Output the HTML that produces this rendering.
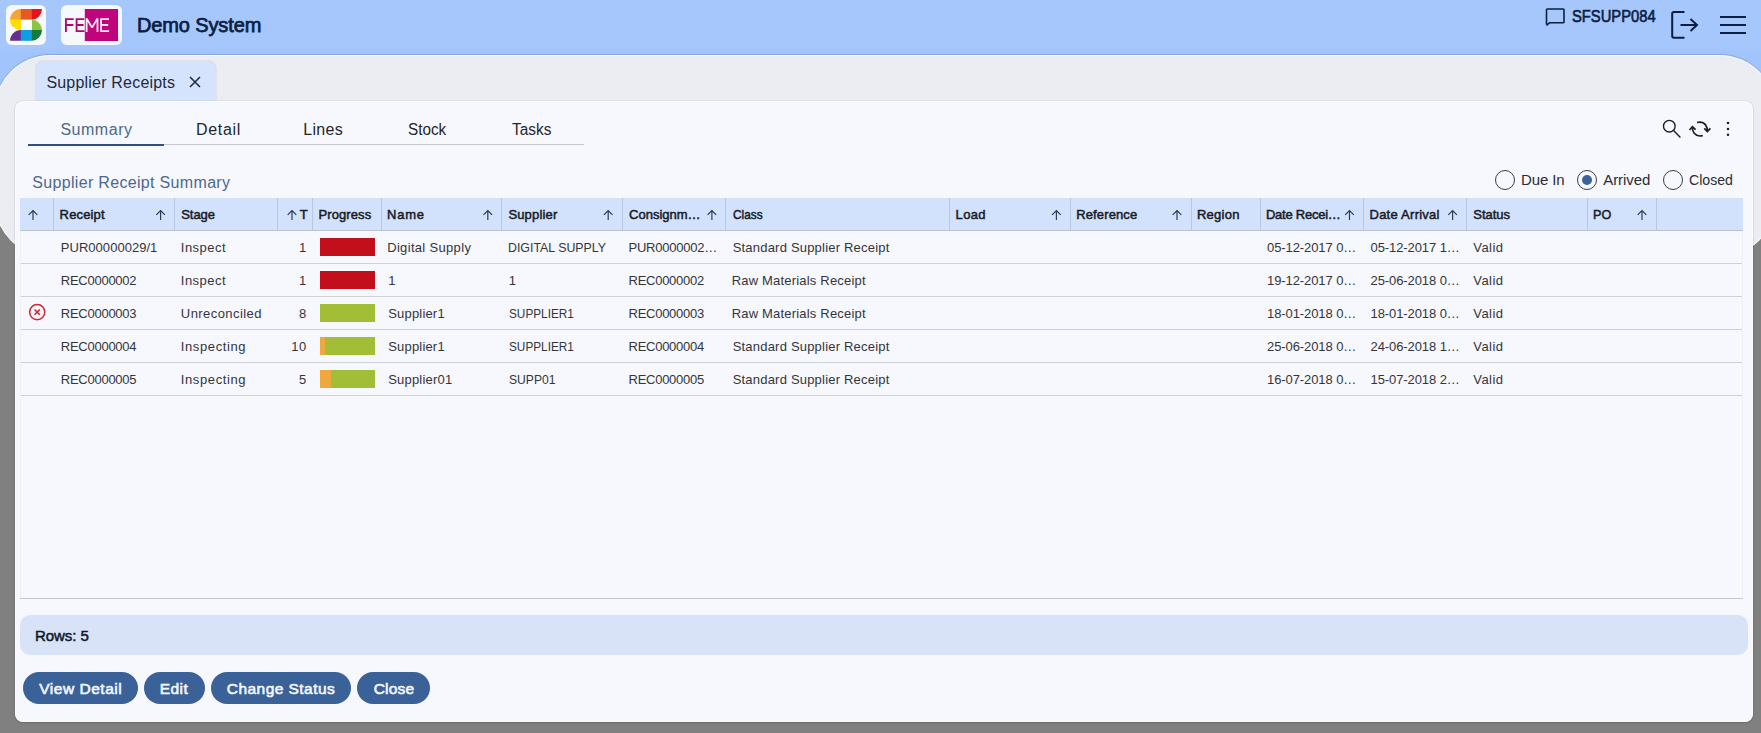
<!DOCTYPE html>
<html><head><meta charset="utf-8">
<style>
html,body{margin:0;padding:0;}
body{width:1761px;height:733px;overflow:hidden;background:#808080;position:relative;font-family:"Liberation Sans",sans-serif;}
.a{position:absolute;}
.t{position:absolute;line-height:0;white-space:nowrap;font-family:"Liberation Sans",sans-serif;}
.hdr{left:0;top:0;width:1761px;height:160px;background:linear-gradient(#a5c7fc 0px, #a5c7fc 44px, #a1c4fc 54px);}
.cont{left:-6.5px;top:54.5px;width:1782.5px;height:202px;border-radius:56.5px;background:#ecedf2;box-sizing:border-box;border:1px solid rgba(250,252,255,0.9);box-shadow:0 -0.5px 1px rgba(30,50,110,0.2);}
.logo{background:#f7f8fc;border-radius:6px;}
.panel{left:15px;top:101px;width:1738px;height:621px;border-radius:8px;background:#f7f8fd;box-shadow:0 0 1px rgba(0,0,0,0.35), 0 1px 2px rgba(0,0,0,0.15), inset 0 0 0 1px rgba(255,255,255,0.6);}
.tab{left:36px;top:61px;width:180px;height:40px;border-radius:8px 8px 0 0;background:#d5e4fc;box-shadow:0 0 1.5px rgba(0,0,0,0.22);}
.thead{left:20px;top:198px;width:1723px;height:32px;background:#d2e1fc;border-bottom:1px solid #bcc3d0;}
.vd{top:198px;width:1px;height:32px;background:#b9c7de;}
.hl{left:20px;width:1723px;height:1px;background:#cdd0d6;}
.bar{top:0;height:18px;}
.btn{top:672px;height:32px;border-radius:16px;background:#3a6299;}
.radio{width:20px;height:20px;border:1.3px solid #3a3d44;border-radius:50%;box-sizing:border-box;top:170px;}
</style></head><body>
<div class="a hdr"></div>
<div class="a cont"></div>

<!-- logo S -->
<div class="a logo" style="left:6px;top:5px;width:40px;height:40px;"></div>
<svg class="a" style="left:0;top:0" width="60" height="50" viewBox="0 0 60 50">
  <path d="M21 9 V19.8 H10 A11 10.8 0 0 1 21 9 Z" fill="#f6a533"/>
  <rect x="20.8" y="9" width="11.2" height="10.8" fill="#ea5624"/>
  <path d="M31.8 9 H42 A10.5 10.8 0 0 1 31.8 19.8 Z" fill="#e3121b"/>
  <path d="M10 19.8 H21 V30 A11 10.2 0 0 1 10 19.8 Z" fill="#ffdd00"/>
  <path d="M31.8 19.8 A10.5 10.2 0 0 1 42 30 H31.8 Z" fill="#8cc43e"/>
  <path d="M10 40.8 A11 10.8 0 0 1 21 30 V40.8 Z" fill="#672d8f"/>
  <rect x="20.8" y="30" width="11.2" height="10.8" fill="#0aa0e2"/>
  <rect x="21" y="19.8" width="10.8" height="10.2" fill="#ffffff"/>
  <path d="M31.8 30 H42 A10.5 10.8 0 0 1 31.8 40.8 Z" fill="#14793a"/>
</svg>
<!-- logo FEME -->
<div class="a logo" style="left:61px;top:5px;width:61px;height:40px;"></div>
<svg class="a" style="left:0;top:0" width="130" height="50" viewBox="0 0 130 50">
  <defs><clipPath id="cl"><rect x="0" y="0" width="84.8" height="50"/></clipPath>
  <clipPath id="cr"><rect x="84.8" y="0" width="50" height="50"/></clipPath></defs>
  <path d="M84.8 9 H118 V41 H84.8 Z" fill="#c0047c"/>
  <g id="feme" fill="none" stroke-width="1.85" stroke-linejoin="miter">
  </g>
  <g clip-path="url(#cl)" fill="none" stroke="#b2066f" stroke-width="1.85">
    <path d="M65.9 31.9 V19.05 H73.7 M65.9 25 H73.4"/>
    <path d="M84.2 19.05 H76.6 V31.05 H84.8 M76.6 25 H83.6"/>
  </g>
  <g clip-path="url(#cr)" fill="none" stroke="#fbe9f6" stroke-width="1.85">
    <path d="M84.2 19.05 H76.6 V31.05 H84.8 M76.6 25 H83.6"/>
    <path d="M86.6 31.9 V18.4 L92.05 27.6 L97.5 18.4 V31.9" stroke-linejoin="bevel"/>
    <path d="M109 19.05 H101.1 V31.05 H109.1 M101.1 25 H108.2"/>
  </g>
</svg>
<!-- chat icon -->
<svg class="a" style="left:1540px;top:4px" width="30" height="26" viewBox="0 0 30 26">
  <path d="M6.5 20.5 V5.8 Q6.5 5 7.3 5 H23.2 Q24 5 24 5.8 V18 Q24 18.8 23.2 18.8 H9.5 L6.5 21.5" fill="none" stroke="#0c1e42" stroke-width="1.6" stroke-linejoin="round"/>
</svg>
<!-- logout -->
<svg class="a" style="left:1665px;top:5px" width="40" height="40" viewBox="0 0 40 40">
  <path d="M19.5 7 H9 Q7.2 7 7.2 8.8 V31 Q7.2 32.8 9 32.8 H19.5" fill="none" stroke="#0c1e42" stroke-width="2" />
  <path d="M15.5 20 H32" fill="none" stroke="#0c1e42" stroke-width="2"/>
  <path d="M25.5 14 L32 20 L25.5 26" fill="none" stroke="#0c1e42" stroke-width="2" stroke-linejoin="miter"/>
</svg>
<!-- hamburger -->
<div class="a" style="left:1720px;top:15.7px;width:26px;height:2.1px;background:#0c1e42"></div>
<div class="a" style="left:1720px;top:23.8px;width:26px;height:2.1px;background:#0c1e42"></div>
<div class="a" style="left:1720px;top:32px;width:26px;height:2.1px;background:#0c1e42"></div>

<!-- tab -->
<div class="a tab"></div>
<svg class="a" style="left:185px;top:72px" width="20" height="20" viewBox="0 0 20 20">
  <path d="M5 5 L15 15 M15 5 L5 15" stroke="#1d2a3c" stroke-width="1.5"/>
</svg>

<!-- panel -->
<div class="a panel"></div>

<!-- subtabs lines -->
<div class="a" style="left:28px;top:144px;width:556px;height:1.2px;background:#c6c7cb"></div>
<div class="a" style="left:28px;top:143.6px;width:136px;height:2.4px;background:#31507e"></div>

<!-- toolbar icons -->
<svg class="a" style="left:1655px;top:112px" width="90" height="32" viewBox="0 0 90 32">
  <circle cx="14.3" cy="14.2" r="5.8" fill="none" stroke="#1b1d22" stroke-width="1.35"/>
  <path d="M18.6 18.6 L25.4 25.4" stroke="#1b1d22" stroke-width="1.45"/>
  <path d="M47.8 23.5 Q42.5 25.2 39.2 21.2 Q37 18.3 37.5 15" fill="none" stroke="#1b1d22" stroke-width="1.7"/>
  <path d="M34.5 18 L37.4 14.8 L40.6 17.6" fill="none" stroke="#1b1d22" stroke-width="1.7"/>
  <path d="M42 10.5 Q47.5 9.1 50.6 12.9 Q52.6 15.7 52.3 19.1" fill="none" stroke="#1b1d22" stroke-width="1.7"/>
  <path d="M49.3 16.3 L52.3 19.5 L55.4 16.3" fill="none" stroke="#1b1d22" stroke-width="1.7"/>
  <circle cx="73" cy="11" r="1.25" fill="#1b1d22"/>
  <circle cx="73" cy="17" r="1.25" fill="#1b1d22"/>
  <circle cx="73" cy="22.8" r="1.25" fill="#1b1d22"/>
</svg>

<!-- radios -->
<div class="a radio" style="left:1495px;"></div>
<div class="a radio" style="left:1577px;"></div>
<div class="a" style="left:1581.8px;top:174.9px;width:10.2px;height:10.2px;border-radius:50%;background:#3a6199"></div>
<div class="a radio" style="left:1663px;"></div>

<!-- table header -->
<div class="a thead"></div>
<div class="a vd" style="left:53px"></div>
<div class="a vd" style="left:174px"></div>
<div class="a vd" style="left:277px"></div>
<div class="a vd" style="left:312px"></div>
<div class="a vd" style="left:381px"></div>
<div class="a vd" style="left:501px"></div>
<div class="a vd" style="left:622px"></div>
<div class="a vd" style="left:725px"></div>
<div class="a vd" style="left:949px"></div>
<div class="a vd" style="left:1070px"></div>
<div class="a vd" style="left:1191px"></div>
<div class="a vd" style="left:1260px"></div>
<div class="a vd" style="left:1363px"></div>
<div class="a vd" style="left:1466px"></div>
<div class="a vd" style="left:1587px"></div>
<div class="a vd" style="left:1656px"></div>
<svg class="a" style="left:0;top:198px" width="1761" height="32" viewBox="0 0 1761 32">
  <g fill="none" stroke="#2a3850" stroke-width="1.15">
  <path d="M33 22 V12.6 M28.7 16.9 L33 12.6 L37.3 16.9"/>
<path d="M160.6 22 V12.6 M156.29999999999998 16.9 L160.6 12.6 L164.9 16.9"/>
<path d="M292 22 V12.6 M287.7 16.9 L292 12.6 L296.3 16.9"/>
<path d="M487.8 22 V12.6 M483.5 16.9 L487.8 12.6 L492.1 16.9"/>
<path d="M608.2 22 V12.6 M603.9000000000001 16.9 L608.2 12.6 L612.5 16.9"/>
<path d="M711.9 22 V12.6 M707.6 16.9 L711.9 12.6 L716.1999999999999 16.9"/>
<path d="M1056.4 22 V12.6 M1052.1000000000001 16.9 L1056.4 12.6 L1060.7 16.9"/>
<path d="M1177 22 V12.6 M1172.7 16.9 L1177 12.6 L1181.3 16.9"/>
<path d="M1349.5 22 V12.6 M1345.2 16.9 L1349.5 12.6 L1353.8 16.9"/>
<path d="M1452.6 22 V12.6 M1448.3 16.9 L1452.6 12.6 L1456.8999999999999 16.9"/>
<path d="M1642 22 V12.6 M1637.7 16.9 L1642 12.6 L1646.3 16.9"/>

  </g>
</svg>

<!-- row lines -->
<div class="a hl" style="top:263px"></div>
<div class="a hl" style="top:296px"></div>
<div class="a hl" style="top:329px"></div>
<div class="a hl" style="top:362px"></div>
<div class="a hl" style="top:395px"></div>

<!-- progress bars -->
<div class="a" style="left:320px;top:238px;width:55px;height:18px;background:#c30f1b"></div>
<div class="a" style="left:320px;top:271px;width:55px;height:18px;background:#c30f1b"></div>
<div class="a" style="left:320px;top:304px;width:55px;height:18px;background:#a1be36"></div>
<div class="a" style="left:320px;top:337px;width:55px;height:18px;background:#a1be36"></div>
<div class="a" style="left:320px;top:337px;width:5px;height:18px;background:#eea83e"></div>
<div class="a" style="left:320px;top:370px;width:55px;height:18px;background:#a1be36"></div>
<div class="a" style="left:320px;top:370px;width:11px;height:18px;background:#eea83e"></div>

<!-- error icon -->
<svg class="a" style="left:27px;top:302px" width="20" height="20" viewBox="0 0 20 20">
  <circle cx="10.2" cy="10.1" r="7.6" fill="none" stroke="#d2222d" stroke-width="1.5"/>
  <path d="M7.6 7.5 L12.8 12.7 M12.8 7.5 L7.6 12.7" stroke="#d2222d" stroke-width="1.6"/>
</svg>

<!-- bottom -->
<div class="a" style="left:20px;top:598px;width:1723px;height:1px;background:#c6c7cb"></div>
<div class="a" style="left:1742px;top:231px;width:1px;height:367px;background:#eef0f5"></div>
<div class="a" style="left:20px;top:231px;width:1px;height:367px;background:#eef0f5"></div>
<div class="a" style="left:20px;top:615px;width:1728px;height:40px;border-radius:10px;background:#d9e3f8"></div>

<div class="a btn" style="left:23px;width:115px"></div>
<div class="a btn" style="left:144px;width:61px"></div>
<div class="a btn" style="left:211px;width:140px"></div>
<div class="a btn" style="left:357px;width:73px"></div>

<div class="t" style="left:136.90px;top:25.00px;font-size:20px;letter-spacing:-0.113px;color:#0c1e42;-webkit-text-stroke:0.75px #0c1e42;">Demo System</div>
<div class="t" style="left:1572.00px;top:17.00px;font-size:16px;letter-spacing:0.000px;color:#0c1e42;-webkit-text-stroke:0.6px #0c1e42;transform:scaleX(0.9217);transform-origin:0 0;">SFSUPP084</div>
<div class="t" style="left:46.40px;top:83.00px;font-size:16px;letter-spacing:0.200px;color:#1d2a3c;">Supplier Receipts</div>
<div class="t" style="left:60.40px;top:130.00px;font-size:16px;letter-spacing:0.524px;color:#4b6891;">Summary</div>
<div class="t" style="left:196.00px;top:130.00px;font-size:16px;letter-spacing:0.690px;color:#23262c;">Detail</div>
<div class="t" style="left:303.20px;top:130.00px;font-size:16px;letter-spacing:0.312px;color:#23262c;">Lines</div>
<div class="t" style="left:407.80px;top:130.00px;font-size:16px;letter-spacing:0.000px;color:#23262c;transform:scaleX(0.9533);transform-origin:0 0;">Stock</div>
<div class="t" style="left:512.40px;top:130.00px;font-size:16px;letter-spacing:0.000px;color:#23262c;transform:scaleX(0.9634);transform-origin:0 0;">Tasks</div>
<div class="t" style="left:32.30px;top:183.00px;font-size:16px;letter-spacing:0.322px;color:#4b6891;">Supplier Receipt Summary</div>
<div class="t" style="left:1520.90px;top:180.00px;font-size:15px;letter-spacing:-0.090px;color:#2a2d33;">Due In</div>
<div class="t" style="left:1603.20px;top:180.00px;font-size:15px;letter-spacing:-0.062px;color:#2a2d33;">Arrived</div>
<div class="t" style="left:1689.00px;top:180.00px;font-size:15px;letter-spacing:0.000px;color:#2a2d33;transform:scaleX(0.9407);transform-origin:0 0;">Closed</div>
<div class="t" style="left:59.60px;top:215.00px;font-size:13px;letter-spacing:0.156px;color:#171c28;-webkit-text-stroke:0.5px #171c28;">Receipt</div>
<div class="t" style="left:181.20px;top:215.00px;font-size:13px;letter-spacing:-0.036px;color:#171c28;-webkit-text-stroke:0.5px #171c28;">Stage</div>
<div class="t" style="left:299.70px;top:215.00px;font-size:13px;letter-spacing:0.000px;color:#171c28;-webkit-text-stroke:0.5px #171c28;">T</div>
<div class="t" style="left:318.50px;top:215.00px;font-size:13px;letter-spacing:0.097px;color:#171c28;-webkit-text-stroke:0.5px #171c28;">Progress</div>
<div class="t" style="left:387.00px;top:215.00px;font-size:13px;letter-spacing:0.784px;color:#171c28;-webkit-text-stroke:0.5px #171c28;">Name</div>
<div class="t" style="left:508.40px;top:215.00px;font-size:13px;letter-spacing:0.162px;color:#171c28;-webkit-text-stroke:0.5px #171c28;">Supplier</div>
<div class="t" style="left:629.00px;top:215.00px;font-size:13px;letter-spacing:0.009px;color:#171c28;-webkit-text-stroke:0.5px #171c28;">Consignm…</div>
<div class="t" style="left:733.00px;top:215.00px;font-size:13px;letter-spacing:0.000px;color:#171c28;-webkit-text-stroke:0.5px #171c28;transform:scaleX(0.9089);transform-origin:0 0;">Class</div>
<div class="t" style="left:955.60px;top:215.00px;font-size:13px;letter-spacing:0.303px;color:#171c28;-webkit-text-stroke:0.5px #171c28;">Load</div>
<div class="t" style="left:1076.20px;top:215.00px;font-size:13px;letter-spacing:0.131px;color:#171c28;-webkit-text-stroke:0.5px #171c28;">Reference</div>
<div class="t" style="left:1196.90px;top:215.00px;font-size:13px;letter-spacing:0.287px;color:#171c28;-webkit-text-stroke:0.5px #171c28;">Region</div>
<div class="t" style="left:1265.90px;top:215.00px;font-size:13px;letter-spacing:-0.241px;color:#171c28;-webkit-text-stroke:0.5px #171c28;">Date Recei…</div>
<div class="t" style="left:1369.50px;top:215.00px;font-size:13px;letter-spacing:0.253px;color:#171c28;-webkit-text-stroke:0.5px #171c28;">Date Arrival</div>
<div class="t" style="left:1473.30px;top:215.00px;font-size:13px;letter-spacing:-0.051px;color:#171c28;-webkit-text-stroke:0.5px #171c28;">Status</div>
<div class="t" style="left:1593.23px;top:215.00px;font-size:13px;letter-spacing:0.000px;color:#171c28;-webkit-text-stroke:0.5px #171c28;transform:scaleX(0.9677);transform-origin:0 0;">PO</div>
<div class="t" style="left:60.80px;top:248.00px;font-size:13px;letter-spacing:0.033px;color:#33353a;">PUR00000029/1</div>
<div class="t" style="left:180.80px;top:248.00px;font-size:13px;letter-spacing:0.483px;color:#33353a;">Inspect</div>
<div class="t" style="left:299.00px;top:248.00px;font-size:13px;letter-spacing:0.000px;color:#33353a;">1</div>
<div class="t" style="left:387.20px;top:248.00px;font-size:13px;letter-spacing:0.324px;color:#33353a;">Digital Supply</div>
<div class="t" style="left:507.75px;top:248.00px;font-size:13px;letter-spacing:0.000px;color:#33353a;transform:scaleX(0.9516);transform-origin:0 0;">DIGITAL SUPPLY</div>
<div class="t" style="left:628.50px;top:248.00px;font-size:13px;letter-spacing:-0.236px;color:#33353a;">PUR0000002…</div>
<div class="t" style="left:732.70px;top:248.00px;font-size:13px;letter-spacing:0.202px;color:#33353a;">Standard Supplier Receipt</div>
<div class="t" style="left:1267.00px;top:248.00px;font-size:13px;letter-spacing:-0.087px;color:#33353a;">05-12-2017 0…</div>
<div class="t" style="left:1370.50px;top:248.00px;font-size:13px;letter-spacing:-0.087px;color:#33353a;">05-12-2017 1…</div>
<div class="t" style="left:1473.30px;top:248.00px;font-size:13px;letter-spacing:0.422px;color:#33353a;">Valid</div>
<div class="t" style="left:60.80px;top:281.00px;font-size:13px;letter-spacing:-0.259px;color:#33353a;">REC0000002</div>
<div class="t" style="left:180.80px;top:281.00px;font-size:13px;letter-spacing:0.483px;color:#33353a;">Inspect</div>
<div class="t" style="left:299.00px;top:281.00px;font-size:13px;letter-spacing:0.000px;color:#33353a;">1</div>
<div class="t" style="left:388.20px;top:281.00px;font-size:13px;letter-spacing:0.000px;color:#33353a;">1</div>
<div class="t" style="left:508.70px;top:281.00px;font-size:13px;letter-spacing:0.000px;color:#33353a;">1</div>
<div class="t" style="left:628.50px;top:281.00px;font-size:13px;letter-spacing:-0.259px;color:#33353a;">REC0000002</div>
<div class="t" style="left:731.70px;top:281.00px;font-size:13px;letter-spacing:0.193px;color:#33353a;">Raw Materials Receipt</div>
<div class="t" style="left:1267.00px;top:281.00px;font-size:13px;letter-spacing:-0.087px;color:#33353a;">19-12-2017 0…</div>
<div class="t" style="left:1370.50px;top:281.00px;font-size:13px;letter-spacing:-0.087px;color:#33353a;">25-06-2018 0…</div>
<div class="t" style="left:1473.30px;top:281.00px;font-size:13px;letter-spacing:0.422px;color:#33353a;">Valid</div>
<div class="t" style="left:60.80px;top:314.00px;font-size:13px;letter-spacing:-0.259px;color:#33353a;">REC0000003</div>
<div class="t" style="left:180.80px;top:314.00px;font-size:13px;letter-spacing:0.441px;color:#33353a;">Unreconciled</div>
<div class="t" style="left:299.00px;top:314.00px;font-size:13px;letter-spacing:0.000px;color:#33353a;">8</div>
<div class="t" style="left:388.20px;top:314.00px;font-size:13px;letter-spacing:0.188px;color:#33353a;">Supplier1</div>
<div class="t" style="left:508.70px;top:314.00px;font-size:13px;letter-spacing:0.000px;color:#33353a;transform:scaleX(0.9074);transform-origin:0 0;">SUPPLIER1</div>
<div class="t" style="left:628.50px;top:314.00px;font-size:13px;letter-spacing:-0.259px;color:#33353a;">REC0000003</div>
<div class="t" style="left:731.70px;top:314.00px;font-size:13px;letter-spacing:0.193px;color:#33353a;">Raw Materials Receipt</div>
<div class="t" style="left:1267.00px;top:314.00px;font-size:13px;letter-spacing:-0.087px;color:#33353a;">18-01-2018 0…</div>
<div class="t" style="left:1370.50px;top:314.00px;font-size:13px;letter-spacing:-0.087px;color:#33353a;">18-01-2018 0…</div>
<div class="t" style="left:1473.30px;top:314.00px;font-size:13px;letter-spacing:0.422px;color:#33353a;">Valid</div>
<div class="t" style="left:60.80px;top:347.00px;font-size:13px;letter-spacing:-0.259px;color:#33353a;">REC0000004</div>
<div class="t" style="left:180.80px;top:347.00px;font-size:13px;letter-spacing:0.608px;color:#33353a;">Inspecting</div>
<div class="t" style="left:291.34px;top:347.00px;font-size:13px;letter-spacing:0.427px;color:#33353a;">10</div>
<div class="t" style="left:388.20px;top:347.00px;font-size:13px;letter-spacing:0.188px;color:#33353a;">Supplier1</div>
<div class="t" style="left:508.70px;top:347.00px;font-size:13px;letter-spacing:0.000px;color:#33353a;transform:scaleX(0.9074);transform-origin:0 0;">SUPPLIER1</div>
<div class="t" style="left:628.50px;top:347.00px;font-size:13px;letter-spacing:-0.259px;color:#33353a;">REC0000004</div>
<div class="t" style="left:732.70px;top:347.00px;font-size:13px;letter-spacing:0.202px;color:#33353a;">Standard Supplier Receipt</div>
<div class="t" style="left:1267.00px;top:347.00px;font-size:13px;letter-spacing:-0.087px;color:#33353a;">25-06-2018 0…</div>
<div class="t" style="left:1370.50px;top:347.00px;font-size:13px;letter-spacing:-0.087px;color:#33353a;">24-06-2018 1…</div>
<div class="t" style="left:1473.30px;top:347.00px;font-size:13px;letter-spacing:0.422px;color:#33353a;">Valid</div>
<div class="t" style="left:60.80px;top:380.00px;font-size:13px;letter-spacing:-0.259px;color:#33353a;">REC0000005</div>
<div class="t" style="left:180.80px;top:380.00px;font-size:13px;letter-spacing:0.608px;color:#33353a;">Inspecting</div>
<div class="t" style="left:299.00px;top:380.00px;font-size:13px;letter-spacing:0.000px;color:#33353a;">5</div>
<div class="t" style="left:388.20px;top:380.00px;font-size:13px;letter-spacing:0.197px;color:#33353a;">Supplier01</div>
<div class="t" style="left:508.70px;top:380.00px;font-size:13px;letter-spacing:0.000px;color:#33353a;transform:scaleX(0.9329);transform-origin:0 0;">SUPP01</div>
<div class="t" style="left:628.50px;top:380.00px;font-size:13px;letter-spacing:-0.259px;color:#33353a;">REC0000005</div>
<div class="t" style="left:732.70px;top:380.00px;font-size:13px;letter-spacing:0.202px;color:#33353a;">Standard Supplier Receipt</div>
<div class="t" style="left:1267.00px;top:380.00px;font-size:13px;letter-spacing:-0.087px;color:#33353a;">16-07-2018 0…</div>
<div class="t" style="left:1370.50px;top:380.00px;font-size:13px;letter-spacing:-0.087px;color:#33353a;">15-07-2018 2…</div>
<div class="t" style="left:1473.30px;top:380.00px;font-size:13px;letter-spacing:0.422px;color:#33353a;">Valid</div>
<div class="t" style="left:35.00px;top:636.00px;font-size:15px;letter-spacing:-0.057px;color:#111827;-webkit-text-stroke:0.5px #111827;">Rows: 5</div>
<div class="t" style="left:39.20px;top:689.00px;font-size:15.5px;letter-spacing:0.529px;color:#f4f7ff;-webkit-text-stroke:0.6px #f4f7ff;">View Detail</div>
<div class="t" style="left:159.70px;top:689.00px;font-size:15.5px;letter-spacing:0.433px;color:#f4f7ff;-webkit-text-stroke:0.6px #f4f7ff;">Edit</div>
<div class="t" style="left:226.80px;top:689.00px;font-size:15.5px;letter-spacing:0.451px;color:#f4f7ff;-webkit-text-stroke:0.6px #f4f7ff;">Change Status</div>
<div class="t" style="left:373.70px;top:689.00px;font-size:15.5px;letter-spacing:0.223px;color:#f4f7ff;-webkit-text-stroke:0.6px #f4f7ff;">Close</div>
</body></html>
